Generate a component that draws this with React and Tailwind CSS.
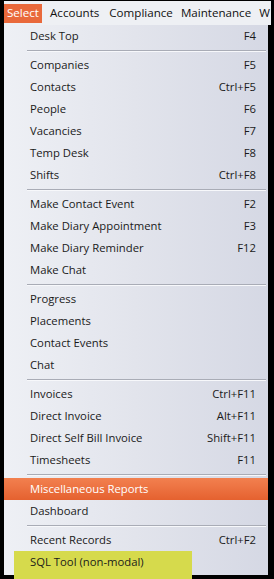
const groups = [
  [['Desk Top', 'F4']],
  [
    ['Companies', 'F5'],
    ['Contacts', 'Ctrl+F5'],
    ['People', 'F6'],
    ['Vacancies', 'F7'],
    ['Temp Desk', 'F8'],
    ['Shifts', 'Ctrl+F8'],
  ],
  [
    ['Make Contact Event', 'F2'],
    ['Make Diary Appointment', 'F3'],
    ['Make Diary Reminder', 'F12'],
    ['Make Chat', ''],
  ],
  [
    ['Progress', ''],
    ['Placements', ''],
    ['Contact Events', ''],
    ['Chat', ''],
  ],
  [
    ['Invoices', 'Ctrl+F11'],
    ['Direct Invoice', 'Alt+F11'],
    ['Direct Self Bill Invoice', 'Shift+F11'],
    ['Timesheets', 'F11'],
  ],
  [
    ['Miscellaneous Reports', '', 'active'],
    ['Dashboard', ''],
  ],
  [
    ['Recent Records', 'Ctrl+F2'],
    ['SQL Tool (non-modal)', '', 'marked'],
  ],
];

function Item({ label, keys, state }) {
  if (state === 'active') {
    return (
      <div className="h-[22px] flex items-center pl-[26px] pr-[12px] bg-gradient-to-b from-[#f2804f] to-[#e5612f] text-white">
        <span className="flex-1">{label}</span>
        <span>{keys}</span>
      </div>
    );
  }
  if (state === 'marked') {
    return (
      <div className="h-[22px] flex items-center">
        <div className="ml-[10px] w-[178px] h-[30px] -mb-[8px] pl-[16px] flex items-start bg-[#d6da4c] text-[#1a1a1a]">
          <span className="leading-[22px]">{label}</span>
        </div>
      </div>
    );
  }
  return (
    <div className="h-[22px] flex items-center pl-[26px] pr-[12px] text-[#1a1a1a]">
      <span className="flex-1">{label}</span>
      <span>{keys}</span>
    </div>
  );
}

function Separator() {
  return (
    <div className="h-[7px] flex flex-col justify-center pl-[23px] pr-[2px]">
      <div className="h-px bg-[#a9acb6]" />
      <div className="h-px bg-[#f7f8fb]" />
    </div>
  );
}

export default function App() {
  return (
    <div
      className="w-[274px] h-[579px] bg-black flex flex-col overflow-hidden text-[11.3px]"
      style={{ fontFamily: '"Open Sans", "Noto Sans", sans-serif' }}
    >
      <div className="h-[24px] ml-[4px] mr-[3px] mt-[1px] bg-[#eef0f4] flex items-center text-[#111] text-[11.6px]">
        <div className="h-[19px] px-[3px] flex items-center bg-[#e9693b] text-white">Select</div>
        <div className="ml-[8px]">Accounts</div>
        <div className="ml-[10px]">Compliance</div>
        <div className="ml-[8px]">Maintenance</div>
        <div className="ml-[8px]">W</div>
      </div>
      <div className="flex-1 ml-[4px] mr-[6px] mb-[4px] bg-gradient-to-r from-[#eef0f5] via-[#e2e4ec] to-[#d5d8e4] flex flex-col">
        {groups.map((g, i) => (
          <div key={i}>
            {i > 0 && <Separator />}
            {g.map(([label, keys, state]) => (
              <Item key={label} label={label} keys={keys} state={state} />
            ))}
          </div>
        ))}
      </div>
    </div>
  );
}
